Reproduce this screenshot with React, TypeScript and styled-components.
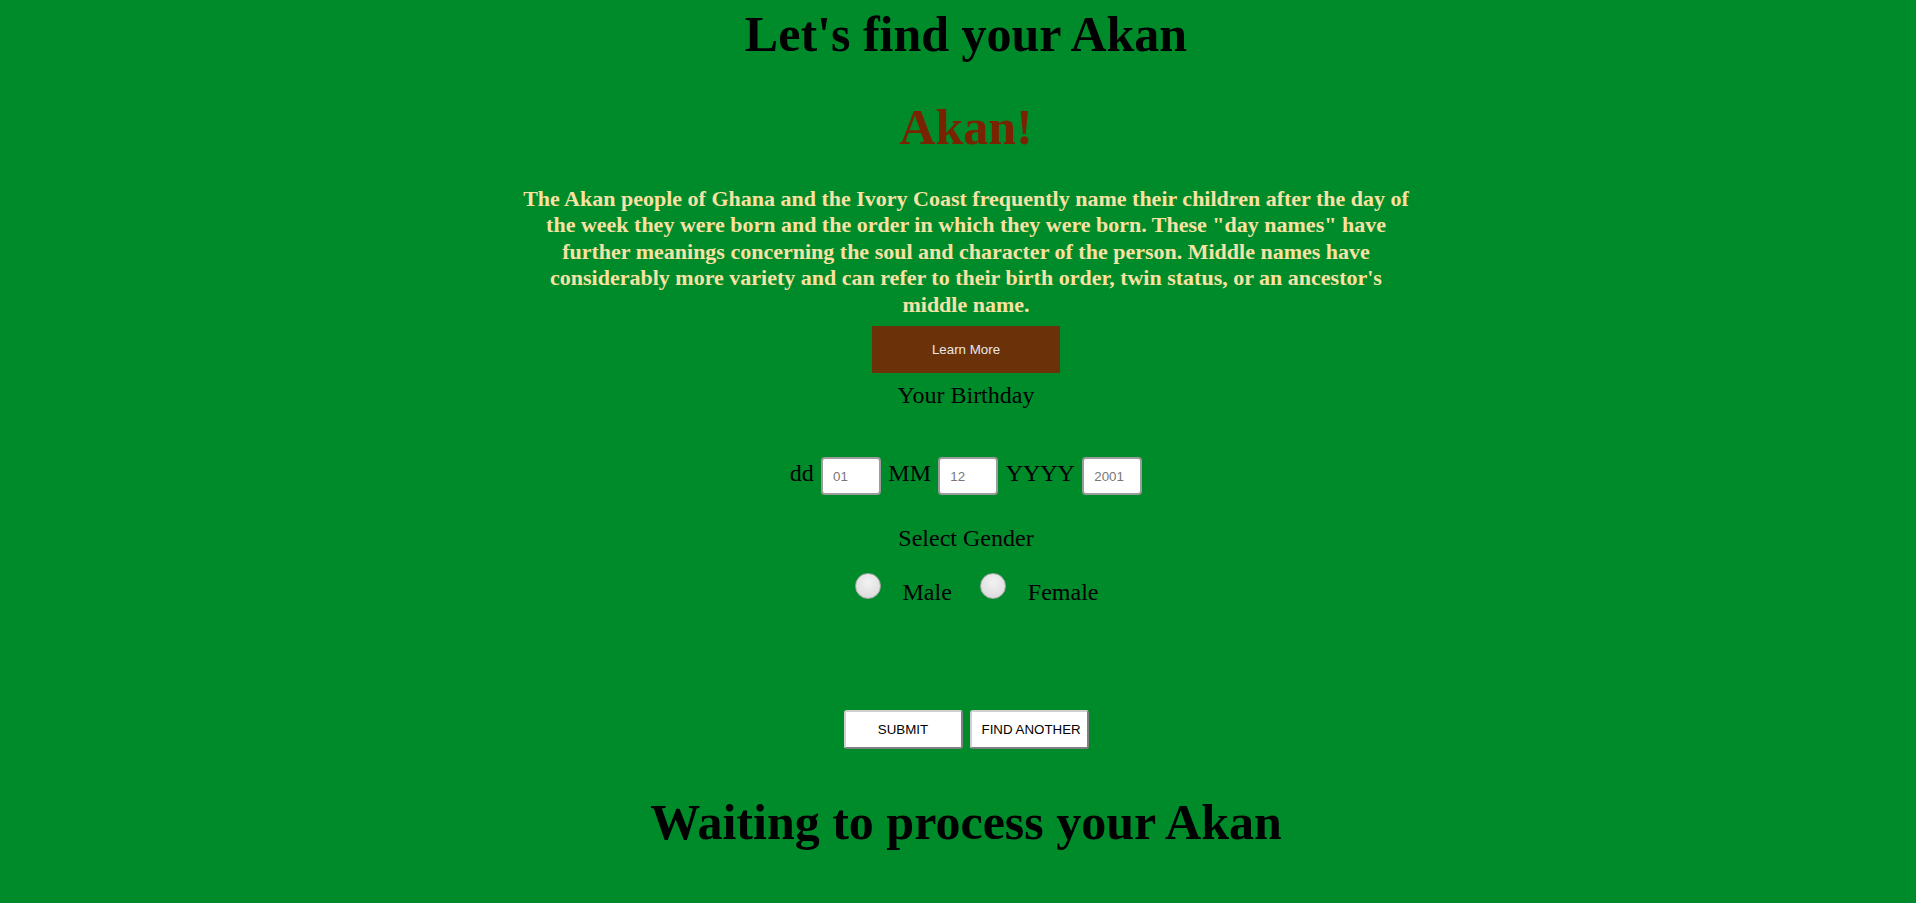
import React from "react";
import styled, { createGlobalStyle } from "styled-components";

const GlobalStyle = createGlobalStyle`
  html, body {
    margin: 0;
    padding: 0;
    background: #008b2b;
  }
  body {
    font-family: "Liberation Serif", "Times New Roman", serif;
    color: #000;
  }
`;

const Page = styled.main`
  display: flex;
  flex-direction: column;
  align-items: center;
  padding: 5px 8px 40px 24px;
  text-align: center;
`;

const Title = styled.h1<{ $gap?: number }>`
  margin: ${(p) => p.$gap ?? 0}px 0 0;
  font-size: 50px;
  font-weight: bold;
  line-height: normal;
  color: #000;
`;

const Accent = styled.h2`
  margin: 35px 0 0;
  font-size: 50px;
  font-weight: bold;
  line-height: normal;
  color: #7a2302;
`;

const Description = styled.p`
  margin: 29.5px 0 0;
  width: 892px;
  font-size: 22px;
  font-weight: bold;
  line-height: 26.5px;
  color: #f7e2a3;
`;

const LearnButton = styled.button`
  margin-top: 8px;
  width: 188px;
  height: 47px;
  border: none;
  background: #6b3108;
  color: #e8e8e8;
  font-family: "Liberation Sans", Arial, sans-serif;
  font-size: 13.333px;
  cursor: pointer;
`;

const SectionLabel = styled.div<{ $gap: number }>`
  margin-top: ${(p) => p.$gap}px;
  font-size: 24px;
  line-height: normal;
`;

const DateRow = styled.div`
  margin-top: 48px;
  display: flex;
  align-items: baseline;
  gap: 7.3px;
  font-size: 24px;
  line-height: normal;
`;

const DateInput = styled.input`
  box-sizing: border-box;
  width: 60px;
  height: 38px;
  padding: 0 0 0 10px;
  border: 2px solid #9c9c9c;
  border-radius: 4px;
  background: #fff;
  font-family: "Liberation Sans", Arial, sans-serif;
  font-size: 13.333px;
  &::placeholder {
    color: #777;
  }
`;

const GenderRow = styled.div`
  margin-top: 20.5px;
  display: flex;
  align-items: flex-start;
  padding-left: 21px;
  font-size: 24px;
  line-height: normal;
`;

const Radio = styled.input.attrs({ type: "radio" })`
  appearance: none;
  -webkit-appearance: none;
  box-sizing: border-box;
  width: 26px;
  height: 26px;
  margin: 0;
  border-radius: 50%;
  border: 1px solid #a8a8a8;
  background: radial-gradient(circle at 50% 35%, #f2f2f2 0%, #e2e2e2 60%, #d2d2d2 100%);
  cursor: pointer;
`;

const RadioLabel = styled.label<{ $after: number }>`
  margin: 6px ${(p) => p.$after}px 0 22px;
`;

const ActionRow = styled.div`
  margin-top: 104px;
  display: flex;
  gap: 7px;
`;

const ActionButton = styled.button`
  box-sizing: border-box;
  width: 119px;
  height: 39px;
  padding: 0 10px;
  background: #fff;
  border: 2px solid;
  border-color: #d0d0d0 #808080 #808080 #d0d0d0;
  border-radius: 3px;
  color: #000;
  font-family: "Liberation Sans", Arial, sans-serif;
  font-size: 13.333px;
  text-transform: uppercase;
  white-space: nowrap;
  cursor: pointer;
`;

export default function App() {
  return (
    <>
      <GlobalStyle />
      <Page>
        <Title>Let's find your Akan</Title>
        <Accent>Akan!</Accent>
        <Description>
          The Akan people of Ghana and the Ivory Coast frequently name their children after the day of
          the week they were born and the order in which they were born. These "day names" have further
          meanings concerning the soul and character of the person. Middle names have considerably more
          variety and can refer to their birth order, twin status, or an ancestor's middle name.
        </Description>
        <LearnButton>Learn More</LearnButton>
        <SectionLabel $gap={9}>Your Birthday</SectionLabel>
        <DateRow>
          <span>dd</span>
          <DateInput placeholder="01" />
          <span>MM</span>
          <DateInput placeholder="12" />
          <span>YYYY</span>
          <DateInput placeholder="2001" />
        </DateRow>
        <SectionLabel $gap={30}>Select Gender</SectionLabel>
        <GenderRow>
          <Radio name="gender" id="male" />
          <RadioLabel htmlFor="male" $after={28}>Male</RadioLabel>
          <Radio name="gender" id="female" />
          <RadioLabel htmlFor="female" $after={0}>Female</RadioLabel>
        </GenderRow>
        <ActionRow>
          <ActionButton>Submit</ActionButton>
          <ActionButton>Find another</ActionButton>
        </ActionRow>
        <Title $gap={44}>Waiting to process your Akan</Title>
      </Page>
    </>
  );
}
